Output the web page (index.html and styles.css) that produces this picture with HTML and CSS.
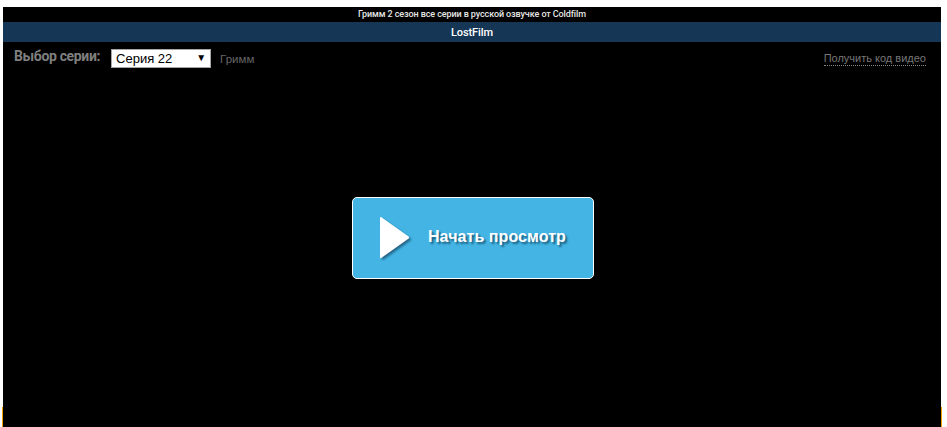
FILE: index.html
```html
<!DOCTYPE html>
<html lang="ru">
<head>
<meta charset="utf-8">
<title>Гримм 2 сезон</title>
<link rel="stylesheet" href="styles.css">
</head>
<body>
<div class="frame">
  <div class="player">
    <div class="title">Гримм 2 сезон все серии в русской озвучке от Coldfilm</div>
    <div class="studio">LostFilm</div>
    <div class="controls">
      <span class="label">Выбор серии:</span>
      <span class="select"><span>Серия 22</span><i class="arrow">▼</i></span>
      <a class="show">Гримм</a>
      <a class="code">Получить код видео</a>
    </div>
    <div class="stage">
      <div class="start">
        <svg class="play" width="36" height="46" viewBox="0 0 36 46"><defs><filter id="s" x="-20%" y="-20%" width="150%" height="150%"><feDropShadow dx="2" dy="2" stdDeviation="1" flood-color="#1c5f80" flood-opacity="0.9"/></filter></defs><path d="M2 2 L29.5 21.5 Q30.5 22.5 29.5 23.5 L2 43 Q1 43.5 1 42 L1 3 Q1 1.5 2 2 Z" fill="#fff" filter="url(#s)"/></svg>
        <span class="start-text">Начать просмотр</span>
      </div>
    </div>
  </div>
</div>
</body>
</html>
```

FILE: styles.css
```css
html, body {
  margin: 0;
  height: 100%;
  background: #fff;
}
body {
  overflow: hidden;
  font-family: Roboto, "Liberation Sans", sans-serif;
}
.frame {
  box-sizing: border-box;
  width: 940px;
  height: 427px;
  margin-left: 2px;
  padding: 7px 1px 0;
  background: linear-gradient(to bottom, transparent 407px, #f5a100 407px);
}
.player {
  height: 420px;
  background: #000;
  display: flex;
  flex-direction: column;
}
.title {
  height: 15px;
  line-height: 15px;
  font-size: 9px;
  font-weight: 500;
  letter-spacing: -0.1px;
  color: #e6e6e6;
  text-align: center;
}
.studio {
  box-sizing: border-box;
  height: 20px;
  line-height: 20px;
  padding-top: 1px;
  background: #163655;
  color: #fff;
  font-size: 11px;
  font-weight: 500;
  letter-spacing: -0.1px;
  text-align: center;
}
.controls {
  display: flex;
  align-items: flex-start;
  height: 32px;
  padding: 7px 15px 0 11px;
  box-sizing: border-box;
}
.label {
  font-size: 14px;
  line-height: 15px;
  font-weight: 700;
  letter-spacing: -0.35px;
  color: #7f7f7f;
  margin-right: 11px;
}
.select {
  box-sizing: border-box;
  width: 100px;
  height: 19px;
  background: #fff;
  border: 1px solid #a6a6a6;
  display: flex;
  align-items: center;
  justify-content: space-between;
  padding: 0 4px 0 4px;
  font-family: "Liberation Sans", sans-serif;
  font-size: 13px;
  color: #000;
}
.arrow {
  font-style: normal;
  font-size: 10px;
  position: relative;
  top: -1px;
}
.show {
  margin-left: 9px;
  margin-top: 4px;
  font-family: "Liberation Sans", sans-serif;
  font-size: 11.5px;
  line-height: 13px;
  color: #666;
}
.code {
  margin-left: auto;
  margin-top: 3px;
  font-family: "Liberation Sans", sans-serif;
  font-size: 11px;
  color: #777;
  border-bottom: 1px dotted #888;
  line-height: 13px;
}
.stage {
  flex: 1;
  display: flex;
  justify-content: center;
  padding: 123px 0 0 2px;
}
.start {
  box-sizing: border-box;
  width: 242px;
  height: 82px;
  background: #43b4e3;
  border: 1px solid #fff;
  border-radius: 5px;
  display: flex;
  align-items: center;
  padding-left: 26px;
}
.start-text {
  margin-left: 13px;
  margin-top: -2px;
  font-family: "Liberation Sans", sans-serif;
  font-size: 16px;
  font-weight: 700;
  letter-spacing: 0.07px;
  color: #fff;
  text-shadow: 2px 2px 2px #1c5f80;
  white-space: nowrap;
}
```
